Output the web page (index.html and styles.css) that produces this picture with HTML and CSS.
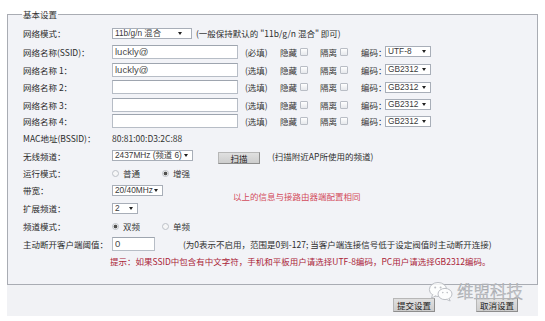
FILE: index.html
```html
<!DOCTYPE html>
<html lang="zh-CN">
<head>
<meta charset="utf-8">
<title>基本设置</title>
<link rel="stylesheet" href="styles.css">
</head>
<body>
<fieldset class="basic">
  <legend>基本设置</legend>

  <div class="row h18">
    <span class="lbl">网络模式：</span>
    <span class="sel w80 tall11">11b/g/n 混合<i class="arr"></i></span>
    <span class="hint ml4">(一般保持默认的 "11b/g/n 混合" 即可)</span>
  </div>

  <div class="row h19">
    <span class="lbl">网络名称(SSID)：</span>
    <input class="inp w126" type="text" value="luckly@">
    <span class="req">(必填)</span>
    <span class="opt">隐藏<span class="cb"></span></span>
    <span class="opt">隔离<span class="cb"></span></span>
    <span class="enc">编码：</span>
    <span class="sel w46">UTF-8<i class="arr"></i></span>
  </div>

  <div class="row h17">
    <span class="lbl">网络名称 1：</span>
    <input class="inp w126" type="text" value="luckly@">
    <span class="req">(选填)</span>
    <span class="opt">隐藏<span class="cb"></span></span>
    <span class="opt">隔离<span class="cb"></span></span>
    <span class="enc">编码：</span>
    <span class="sel w46">GB2312<i class="arr"></i></span>
  </div>

  <div class="row h18">
    <span class="lbl">网络名称 2：</span>
    <input class="inp w126" type="text" value="">
    <span class="req">(选填)</span>
    <span class="opt">隐藏<span class="cb"></span></span>
    <span class="opt">隔离<span class="cb"></span></span>
    <span class="enc">编码：</span>
    <span class="sel w46">GB2312<i class="arr"></i></span>
  </div>

  <div class="row h17">
    <span class="lbl">网络名称 3：</span>
    <input class="inp w126" type="text" value="">
    <span class="req">(选填)</span>
    <span class="opt">隐藏<span class="cb"></span></span>
    <span class="opt">隔离<span class="cb"></span></span>
    <span class="enc">编码：</span>
    <span class="sel w46">GB2312<i class="arr"></i></span>
  </div>

  <div class="row h16">
    <span class="lbl">网络名称 4：</span>
    <input class="inp w126" type="text" value="">
    <span class="req">(选填)</span>
    <span class="opt">隐藏<span class="cb"></span></span>
    <span class="opt">隔离<span class="cb"></span></span>
    <span class="enc">编码：</span>
    <span class="sel w46">GB2312<i class="arr"></i></span>
  </div>

  <div class="row h17">
    <span class="lbl">MAC地址(BSSID)：</span>
    <span class="val">80:81:00:D3:2C:88</span>
  </div>

  <div class="row h19">
    <span class="lbl">无线频道：</span>
    <span class="sel w81">2437MHz (频道 6)<i class="arr"></i></span>
    <span class="btn scan">扫描</span>
    <span class="hint ml12">(扫描附近AP所使用的频道)</span>
  </div>

  <div class="row h16">
    <span class="lbl">运行模式：</span>
    <span class="ropt"><span class="rd"></span>普通</span>
    <span class="ropt"><span class="rd on"></span>增强</span>
  </div>

  <div class="group">
    <div class="rows">
      <div class="row h18">
        <span class="lbl">带宽：</span>
        <span class="sel w51">20/40MHz<i class="arr"></i></span>
      </div>
      <div class="row h18">
        <span class="lbl">扩展频道：</span>
        <span class="sel w26">2<i class="arr"></i></span>
      </div>
    </div>
    <span class="notice">以上的信息与接路由器端配置相同</span>
  </div>

  <div class="row h18">
    <span class="lbl">频道模式：</span>
    <span class="ropt"><span class="rd on"></span>双频</span>
    <span class="ropt"><span class="rd"></span>单频</span>
  </div>

  <div class="row h17">
    <span class="lbl">主动断开客户端阈值：</span>
    <input class="inp w43" type="text" value="0">
    <span class="hint ml28">(为0表示不启用，范围是0到-127; 当客户端连接信号低于设定阀值时主动断开连接)</span>
  </div>

  <div class="row h18">
    <span class="lbl"></span>
    <span class="tip">提示：如果SSID中包含有中文字符，手机和平板用户请选择UTF-8编码，PC用户请选择GB2312编码。</span>
  </div>
</fieldset>

<div class="actions">
  <span class="btn big">提交设置</span>
  <span class="btn big">取消设置</span>
</div>

<div class="watermark">
  <svg class="wx" width="26" height="21" viewBox="0 0 26 21">
    <ellipse cx="10" cy="8.5" rx="8.6" ry="7" fill="#ffffff" fill-opacity="0.9" stroke="#b9bcc2" stroke-width="1"/>
    <path d="M4.5 13.5 L3.6 17 L8 14.8" fill="#ffffff" stroke="#b9bcc2" stroke-width="1"/>
    <circle cx="7.2" cy="6.5" r="1" fill="#b9bcc2"/>
    <circle cx="12.6" cy="6.5" r="1" fill="#b9bcc2"/>
    <ellipse cx="17" cy="13" rx="7" ry="5.6" fill="#ffffff" fill-opacity="0.95" stroke="#b9bcc2" stroke-width="1"/>
    <path d="M21 17.3 L22.2 20 L18.6 18.4" fill="#ffffff" stroke="#b9bcc2" stroke-width="1"/>
    <circle cx="14.8" cy="11.6" r="0.8" fill="#b9bcc2"/>
    <circle cx="19.2" cy="11.6" r="0.8" fill="#b9bcc2"/>
  </svg>
  <span class="wm-text">维盟科技</span>
</div>
</body>
</html>
```

FILE: styles.css
```css
* {
  box-sizing: border-box;
}

html, body {
  margin: 0;
  padding: 0;
}

body {
  width: 545px;
  height: 321px;
  overflow: hidden;
  position: relative;
  background: #ffffff;
  color: #2b2b2b;
  font-family: "Noto Sans CJK SC", "Liberation Sans", sans-serif;
  font-size: 8.5px;
  line-height: 10px;
}

.basic {
  margin: 9px 0 0 7px;
  width: 531px;
  min-width: 0;
  padding: 5px 10px 14px 15px;
  border: 1px solid #a9acb3;
  background: #f2f3f7;
}

.basic legend {
  padding: 0 1px;
  margin-left: -1px;
  line-height: 10px;
  font-size: 8.5px;
  color: #333;
}

.row {
  display: flex;
  align-items: center;
  white-space: nowrap;
}

.h16 { height: 16px; }
.h17 { height: 17px; }
.h18 { height: 18px; }
.h19 { height: 19px; }

.lbl {
  width: 89px;
  flex: none;
  color: #2b2b2b;
}

.val {
  color: #333;
}

.hint {
  color: #2e2e2e;
}

.ml4 { margin-left: 4px; }
.ml12 { margin-left: 12px; }
.ml28 { margin-left: 28px; }

/* select-like boxes */
.sel {
  display: flex;
  align-items: center;
  justify-content: space-between;
  flex: none;
  height: 11px;
  padding: 0 4px 0 2px;
  border: 1px solid #a8aeb8;
  background: #ffffff;
  color: #3a3a3a;
  font-family: "Liberation Sans", "Noto Sans CJK SC", sans-serif;
  font-size: 8.3px;
  line-height: 9px;
}

.tall11 { height: 11px; }
.w26 { width: 26px; }
.w46 { width: 46px; }
.w51 { width: 51px; }
.w80 { width: 80px; padding-right: 9px; }
.w81 { width: 81px; }

.arr {
  display: block;
  width: 0;
  height: 0;
  border-left: 2.5px solid transparent;
  border-right: 2.5px solid transparent;
  border-top: 3.5px solid #202020;
  flex: none;
}

/* text inputs */
.inp {
  display: block;
  flex: none;
  height: 14px;
  margin: 0;
  padding: 0 2px;
  border: 1px solid #b7bdc6;
  border-top-color: #9ea5af;
  background: #ffffff;
  color: #4a4a4a;
  font-family: "Liberation Sans", sans-serif;
  font-size: 9.5px;
  line-height: 12px;
  outline: none;
}

.w126 { width: 126px; }
.w43 { width: 43px; }

.req {
  width: 35px;
  margin-left: 7px;
  flex: none;
  color: #333;
}

.opt {
  display: flex;
  align-items: center;
  width: 40px;
  flex: none;
  color: #333;
}

.opt + .opt {
  width: 41px;
}

.cb {
  display: block;
  width: 8px;
  height: 8px;
  margin-left: 3px;
  border: 1px solid #b9bdc5;
  border-radius: 1px;
  background: linear-gradient(#ffffff, #e6e8ec);
}

.enc {
  width: 24px;
  flex: none;
  color: #333;
}

/* radio options */
.ropt {
  display: flex;
  align-items: center;
  width: 50px;
  flex: none;
  color: #333;
}

.rd {
  display: block;
  width: 7px;
  height: 7px;
  margin-right: 4px;
  border-radius: 50%;
  border: 1px solid #bcc0c7;
  background: #f6f6f7;
}

.rd.on {
  background: radial-gradient(circle, #505050 0 1.5px, #f2f2f2 2.2px);
}

/* buttons */
.btn {
  display: flex;
  align-items: center;
  justify-content: center;
  flex: none;
  border: 1px solid #b7b7b7;
  border-right-color: #8e8e8e;
  border-bottom-color: #8e8e8e;
  background: linear-gradient(#e0e0e0, #cdcdcd);
  color: #222;
}

.scan {
  width: 42px;
  height: 12px;
  margin-left: 25px;
  margin-top: 4px;
}

.group {
  display: flex;
  align-items: center;
}

.rows {
  width: 210px;
  flex: none;
}

.notice {
  margin-bottom: 6px;
  color: #d24c5c;
  white-space: nowrap;
}

.tip {
  margin-left: -2px;
  color: #aa2438;
}

/* bottom actions */
.actions {
  display: flex;
  justify-content: flex-end;
  align-items: flex-start;
  gap: 41px;
  margin-left: 7px;
  width: 531px;
  height: 31px;
  padding: 13px 20px 0 0;
  background: #f1f2f5;
}

.big {
  width: 42px;
  height: 14px;
}

/* watermark overlay */
.watermark {
  position: absolute;
  left: 428px;
  top: 281px;
  display: flex;
  align-items: center;
  gap: 3px;
  opacity: 0.92;
}

.wx {
  display: block;
}

.wm-text {
  font-family: "Noto Sans CJK SC", sans-serif;
  font-size: 16.5px;
  line-height: 19px;
  font-weight: 300;
  color: rgba(255, 255, 255, 0.85);
  -webkit-text-stroke: 0.6px #a3a6ab;
  letter-spacing: 0;
}
```
